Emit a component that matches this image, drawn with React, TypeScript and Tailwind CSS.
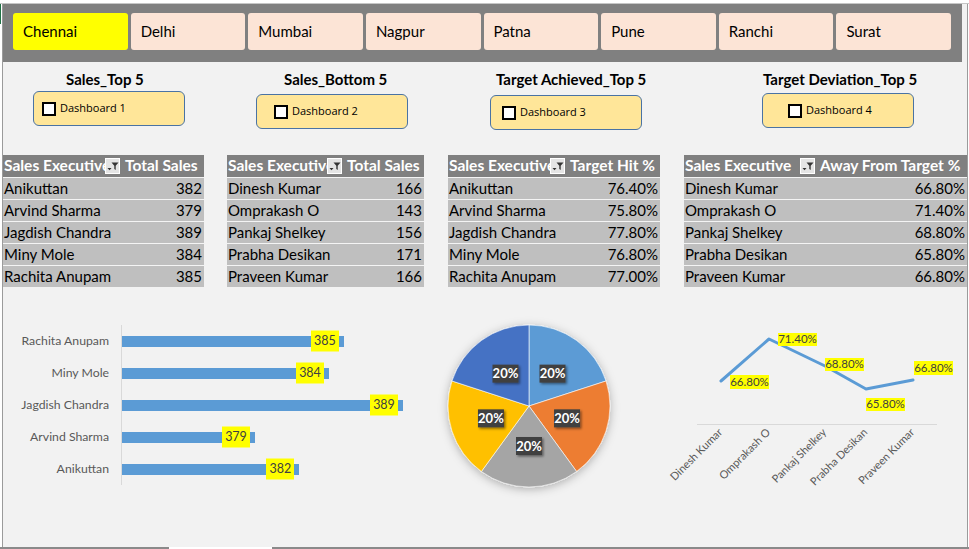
import React from "react";

const cities = ["Chennai", "Delhi", "Mumbai", "Nagpur", "Patna", "Pune", "Ranchi", "Surat"];

const blocks = [
  { title: "Sales_Top 5", label: "Dashboard 1", wrap: "w-[224px]", titleCls: "pl-[63px]", btnCls: "ml-[30px] mt-[3px] pl-[8px]" },
  { title: "Sales_Bottom 5", label: "Dashboard 2", wrap: "w-[221px]", titleCls: "pl-[57px]", btnCls: "ml-[29px] mt-[6px] pl-[17px]" },
  { title: "Target Achieved_Top 5", label: "Dashboard 3", wrap: "w-[233px]", titleCls: "pl-[48px]", btnCls: "ml-[42px] mt-[7px] pl-[11px]" },
  { title: "Target Deviation_Top 5", label: "Dashboard 4", wrap: "flex-1", titleCls: "pl-[82px]", btnCls: "ml-[81px] mt-[5px] pl-[25px]" },
];

const tables = [
  {
    head: "Total Sales",
    wrap: "w-[201px]",
    col1: "w-[118px]",
    rows: [
      ["Anikuttan", "382"],
      ["Arvind Sharma", "379"],
      ["Jagdish Chandra", "389"],
      ["Miny Mole", "384"],
      ["Rachita Anupam", "385"],
    ],
  },
  {
    head: "Total Sales",
    wrap: "w-[197px] ml-[23px]",
    col1: "w-[116px]",
    rows: [
      ["Dinesh Kumar", "166"],
      ["Omprakash O", "143"],
      ["Pankaj Shelkey", "156"],
      ["Prabha Desikan", "171"],
      ["Praveen Kumar", "166"],
    ],
  },
  {
    head: "Target Hit %",
    wrap: "w-[212px] ml-[24px]",
    col1: "w-[118px]",
    rows: [
      ["Anikuttan", "76.40%"],
      ["Arvind Sharma", "75.80%"],
      ["Jagdish Chandra", "77.80%"],
      ["Miny Mole", "76.80%"],
      ["Rachita Anupam", "77.00%"],
    ],
  },
  {
    head: "Away From Target %",
    wrap: "flex-1 ml-[24px]",
    col1: "w-[132px]",
    rows: [
      ["Dinesh Kumar", "66.80%"],
      ["Omprakash O", "71.40%"],
      ["Pankaj Shelkey", "68.80%"],
      ["Prabha Desikan", "65.80%"],
      ["Praveen Kumar", "66.80%"],
    ],
  },
];

const bars = [
  { name: "Rachita Anupam", v: 385 },
  { name: "Miny Mole", v: 384 },
  { name: "Jagdish Chandra", v: 389 },
  { name: "Arvind Sharma", v: 379 },
  { name: "Anikuttan", v: 382 },
];

const linePts = [
  { name: "Dinesh Kumar", x: 61, y: 61, lx: 70, ly: 55, h: 14, t: "66.80%" },
  { name: "Omprakash O", x: 109, y: 19, lx: 118, ly: 13, h: 13, t: "71.40%" },
  { name: "Pankaj Shelkey", x: 165, y: 46, lx: 165, ly: 38, h: 13, t: "68.80%" },
  { name: "Prabha Desikan", x: 206, y: 69, lx: 206, ly: 78, h: 13, t: "65.80%" },
  { name: "Praveen Kumar", x: 253, y: 60, lx: 254, ly: 41, h: 14, t: "66.80%" },
];

function FilterIcon() {
  return (
    <span className="shrink-0 w-[15px] h-[16px] bg-[#e4e4e4] border border-white flex items-center justify-center">
      <svg width="12" height="12" viewBox="0 0 12 12">
        <path d="M0.5 8h4l-2 2.2z" fill="#333" />
        <path d="M4.5 2.5h7l-2.8 3.3v4.2l-1.4-1v-3.2z" fill="#333" />
      </svg>
    </span>
  );
}

function Pie() {
  const cx = 95;
  const cy = 95;
  const r = 81;
  const colors = ["#5b9bd5", "#ed7d31", "#a5a5a5", "#ffc000", "#4472c4"];
  const pt = (a: number, rad: number) => {
    const t = ((a - 90) * Math.PI) / 180;
    return [cx + rad * Math.cos(t), cy + rad * Math.sin(t)];
  };
  return (
    <svg width="190" height="190" viewBox="0 0 190 190" className="overflow-visible">
      <defs>
        <filter id="pieShadow" x="-20%" y="-20%" width="140%" height="140%">
          <feDropShadow dx="0" dy="2" stdDeviation="5" floodColor="#000" floodOpacity="0.28" />
        </filter>
        <filter id="lblShadow" x="-30%" y="-30%" width="160%" height="160%">
          <feDropShadow dx="1.5" dy="1.5" stdDeviation="1" floodColor="#000" floodOpacity="0.45" />
        </filter>
      </defs>
      <g filter="url(#pieShadow)">
        {colors.map((c, i) => {
          const [x0, y0] = pt(i * 72, r);
          const [x1, y1] = pt((i + 1) * 72, r);
          return (
            <path
              key={i}
              d={`M${cx} ${cy} L${x0} ${y0} A${r} ${r} 0 0 1 ${x1} ${y1} Z`}
              fill={c}
              stroke="#ffffff"
              strokeWidth="0.6"
            />
          );
        })}
      </g>
      {colors.map((_, i) => {
        const [lx, ly] = pt(i * 72 + 36, 40);
        return (
          <g key={i}>
            <rect x={lx - 13} y={ly - 9} width="26" height="18" fill="#404040" filter="url(#lblShadow)" />
            <text
              x={lx}
              y={ly + 4.5}
              textAnchor="middle"
              fontSize="13"
              fontWeight="700"
              fill="#ffffff"
              fontFamily="Lato, sans-serif"
            >
              20%
            </text>
          </g>
        );
      })}
    </svg>
  );
}

function LineChart() {
  return (
    <svg width="305" height="180" viewBox="0 0 305 180">
      <line x1="37" y1="104.5" x2="277" y2="104.5" stroke="#d9d9d9" strokeWidth="1" />
      <polyline
        points={linePts.map((p) => `${p.x},${p.y}`).join(" ")}
        fill="none"
        stroke="#5b9bd5"
        strokeWidth="3"
        strokeLinejoin="round"
        strokeLinecap="round"
      />
      {linePts.map((p) => (
        <g key={p.name}>
          <rect x={p.lx} y={p.ly} width="39" height={p.h} fill="#ffff00" />
          <text
            x={p.lx + 19.5}
            y={p.ly + p.h - 3}
            textAnchor="middle"
            fontSize="11.5"
            fill="#404040"
            fontFamily="Lato, sans-serif"
          >
            {p.t}
          </text>
          <text
            x={p.x + 2}
            y={113}
            textAnchor="end"
            fontSize="11"
            fill="#595959"
            fontFamily="Lato, sans-serif"
            transform={`rotate(-45 ${p.x + 2} 113)`}
          >
            {p.name}
          </text>
        </g>
      ))}
    </svg>
  );
}

export default function App() {
  return (
    <div className="w-[969px] h-[549px] bg-white flex flex-col overflow-hidden font-[Lato,sans-serif] text-black">
      <div className="h-[4px] shrink-0 border-b border-[#c6c6c6]" />

      <div className="flex h-[543px]">
        <div className="w-[3px] bg-white border-r border-[#9b9b9b]">
          <div className="w-[1px] h-[20px] bg-[#217346]" />
        </div>

        <main className="w-[964px] bg-[#f2f2f2] flex flex-col">
          {/* City slicer */}
          <div className="w-[959px] h-[58px] shrink-0 bg-[#808080] pl-[10px] pr-[11px] pt-[9px] grid grid-cols-8 gap-[3px] content-start">
            {cities.map((c) => (
              <div
                key={c}
                className={`h-[37px] rounded-[3px] flex items-center pl-[10px] text-[15px] ${
                  c === "Chennai" ? "bg-[#ffff00]" : "bg-[#fce4d6]"
                }`}
              >
                {c}
              </div>
            ))}
          </div>

          {/* Titles + dashboard buttons */}
          <div className="h-[93px] shrink-0 flex items-start">
            {blocks.map((b) => (
              <div key={b.title} className={`${b.wrap} flex flex-col pt-[8px]`}>
                <div className={`${b.titleCls} text-[15px] leading-[18px] font-bold whitespace-nowrap`}>{b.title}</div>
                <div
                  className={`${b.btnCls} w-[152px] h-[35px] rounded-[6px] border border-[#4a73a4] bg-[#ffe699] flex items-center gap-[4px] font-['Open_Sans',sans-serif] text-[11px]`}
                >
                  <span className="w-[14px] h-[14px] bg-white border-2 border-black" />
                  <span>{b.label}</span>
                </div>
              </div>
            ))}
          </div>

          {/* Tables */}
          <div className="h-[132px] shrink-0 flex items-start">
            {tables.map((t, ti) => (
              <div key={ti} className={`${t.wrap} text-[15px]`}>
                <div className="h-[22px] bg-[#808080] text-white font-bold text-[15.5px] flex items-center">
                  <div className={`${t.col1} flex items-center pl-[1px] pr-[1px]`}>
                    <span className="flex-1 min-w-0 overflow-hidden whitespace-nowrap">Sales Executive</span>
                    <FilterIcon />
                  </div>
                  <div className="flex-1 pl-[4px] whitespace-nowrap overflow-hidden">{t.head}</div>
                </div>
                {t.rows.map(([n, v]) => (
                  <div key={n} className="h-[22px] bg-[#bfbfbf] border-t border-[#f4f4f4] flex items-center">
                    <div className={`${t.col1} pl-[1px] whitespace-nowrap`}>{n}</div>
                    <div className="flex-1 text-right pr-[2px]">{v}</div>
                  </div>
                ))}
              </div>
            ))}
          </div>

          {/* Charts */}
          <div className="flex-1 flex items-start">
            <div className="w-[431px] pt-[38px] flex">
              <div className="w-[118px] pr-[12px] flex flex-col text-right text-[12.25px] text-[#595959]">
                {bars.map((b) => (
                  <div key={b.name} className="h-[32px] flex items-center justify-end whitespace-nowrap">
                    {b.name}
                  </div>
                ))}
              </div>
              <div className="border-l border-[#d9d9d9] flex flex-col">
                {bars.map((b) => (
                  <div key={b.name} className="h-[32px] flex items-center">
                    <div
                      className="relative h-[11px] bg-[#5b9bd5]"
                      style={{ width: 133 + (b.v - 379) * 14.8 }}
                    >
                      <span className="absolute right-[5px] top-1/2 -translate-y-1/2 w-[28px] h-[21px] bg-[#ffff00] text-[#404040] text-[12.5px] flex items-center justify-center">
                        {b.v}
                      </span>
                    </div>
                  </div>
                ))}
              </div>
            </div>

            <div className="mt-[24px]">
              <Pie />
            </div>

            <div className="ml-[36px] mt-[33px]">
              <LineChart />
            </div>
          </div>
        </main>

        <div className="flex-1 bg-white border-l border-[#9b9b9b]" />
      </div>

      <div className="h-[2px] shrink-0 bg-[#8a8a8a] flex">
        <div className="ml-[169px] w-[103px] bg-white" />
      </div>
    </div>
  );
}
